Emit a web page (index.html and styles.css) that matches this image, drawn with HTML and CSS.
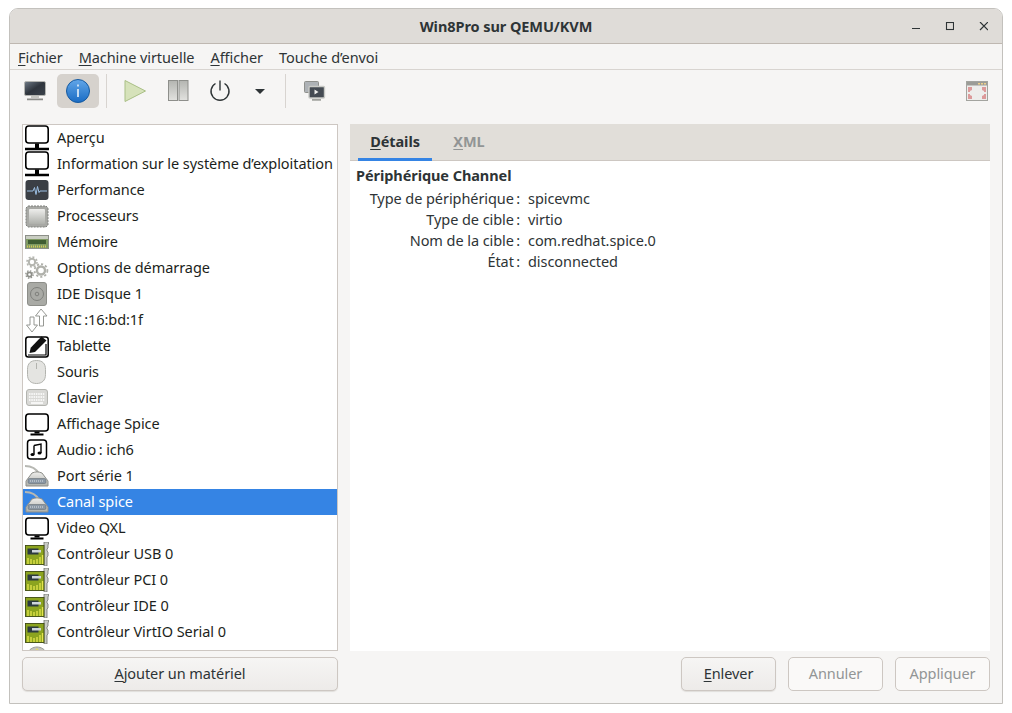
FILE: index.html
```html
<!DOCTYPE html>
<html>
  <head>
    <meta charset="UTF-8">
    <title>Win8Pro sur QEMU/KVM</title>
    <link rel="stylesheet" href="styles.css">
  </head>

  <body>
    <svg class="defs" width="0" height="0">
      <defs>
        <linearGradient id="screen" x1="0" y1="0" x2="1" y2="1">
          <stop offset="0" stop-color="#6f7a86"/><stop offset=".5" stop-color="#2f353d"/><stop offset="1" stop-color="#3c434c"/>
        </linearGradient>
        <linearGradient id="metal" x1="0" y1="0" x2="0" y2="1">
          <stop offset="0" stop-color="#eeeeec"/><stop offset="1" stop-color="#aeb0ab"/>
        </linearGradient>
        <linearGradient id="bar" x1="0" y1="0" x2="0" y2="1">
          <stop offset="0" stop-color="#b4b5b1"/><stop offset="1" stop-color="#e2e2df"/>
        </linearGradient>
        <linearGradient id="orb" x1="0" y1="0" x2="0" y2="1">
          <stop offset="0" stop-color="#62a6e8"/><stop offset="1" stop-color="#1a6cc4"/>
        </linearGradient>

        <symbol id="i-monitor-wide" viewBox="0 0 24 26">
          <rect x=".8" y="1" width="22.400" height="17" rx="3" fill="#fff" stroke="#000" stroke-width="1.600"/>
          <path d="M10 18.500h4v4.500h-4z" fill="#000"/>
          <path d="M0 22.800h24v2.400H0z" fill="#000"/>
        </symbol>
        <symbol id="i-monitor" viewBox="0 0 24 24">
          <rect x=".8" y="2" width="22.400" height="17" rx="3" fill="#fff" stroke="#000" stroke-width="1.600"/>
          <path d="M9.500 19.500h5v2h-5z" fill="#000"/>
          <path d="M5.500 21.500h13v2h-13z" fill="#000"/>
        </symbol>
        <symbol id="i-perf" viewBox="0 0 24 24">
          <rect x=".5" y="2" width="23" height="20" rx="3" fill="#3b3f45"/>
          <path d="M2 13h6l1.500-3.500 1.500 7 1.500-8 1.500 6 1-1.500h7" fill="none" stroke="#9cc0e4" stroke-width="1"/>
        </symbol>
        <symbol id="i-cpu" viewBox="0 0 24 24">
          <path d="M3 2h18l2 2v17l-2 2H3l-2-2V4z" fill="#a8a9a5" stroke="#7f807c" stroke-dasharray="2 1"/>
          <rect x="4" y="5" width="16" height="15" rx="1" fill="url(#metal)"/>
        </symbol>
        <symbol id="i-ram" viewBox="0 0 24 24">
          <rect x=".5" y="5.500" width="23" height="13" fill="#7f9a63" stroke="#8c8f88"/>
          <rect x="1" y="6" width="22" height="3" fill="#c9cdc2"/>
          <rect x="3" y="10" width="18" height="4" fill="#3f5c33"/>
          <path d="M2 16.500h20" stroke="#d4c75a" stroke-width="2" stroke-dasharray="1 1"/>
        </symbol>
        <symbol id="i-gears" viewBox="0 0 24 24">
          <circle cx="7" cy="6" r="3.200" fill="none" stroke="#b4b5af" stroke-width="2"/>
          <circle cx="7" cy="6" r="5" fill="none" stroke="#b4b5af" stroke-width="1.600" stroke-dasharray="2 1.900"/>
          <circle cx="16" cy="14.500" r="4" fill="none" stroke="#b0b1ab" stroke-width="2.400"/>
          <circle cx="16" cy="14.500" r="6.400" fill="none" stroke="#b0b1ab" stroke-width="1.800" stroke-dasharray="2.200 2"/>
          <circle cx="4.500" cy="18.500" r="2.200" fill="none" stroke="#8d8e88" stroke-width="1.800"/>
          <circle cx="4.500" cy="18.500" r="3.700" fill="none" stroke="#8d8e88" stroke-width="1.200" stroke-dasharray="1.500 1.400"/>
        </symbol>
        <symbol id="i-disk" viewBox="0 0 24 24">
          <rect x="2.500" y=".5" width="19" height="23" rx="2.500" fill="#a9aaa5" stroke="#8d8e89"/>
          <circle cx="12" cy="12" r="6.500" fill="none" stroke="#7f807c"/>
          <circle cx="12" cy="12" r="1.800" fill="none" stroke="#7f807c"/>
        </symbol>
        <symbol id="i-nic" viewBox="0 0 24 24">
          <path d="M7 24l-5.500-7h3.500V9h4v8h3.500z" fill="#fff" stroke="#8b8d88" stroke-width=".9"/>
          <path d="M16 1l6 7h-3.500v10h-4V8H10.500z" fill="#fff" stroke="#8b8d88" stroke-width=".9"/>
        </symbol>
        <symbol id="i-tablet" viewBox="0 0 24 24">
          <rect x=".8" y="3" width="22.400" height="20" rx="2.500" fill="#fff" stroke="#000" stroke-width="1.500"/>
          <path d="M4.500 19l1.200-5.200L16.500 2.500l5 4L10 18z" fill="#111"/>
          <path d="M3 21h18V10" fill="none" stroke="#000" stroke-width="1.200"/>
        </symbol>
        <symbol id="i-mouse" viewBox="0 0 24 24">
          <path d="M11.500 .5c6 0 9 3 9 9v5c0 6-3.500 9-9 9s-9-3-9-9v-5c0-6 3-9 9-9z" fill="#e4e4e1" stroke="#b2b3ae"/>
          <path d="M11.500 3v6" stroke="#b2b3ae"/>
        </symbol>
        <symbol id="i-keys" viewBox="0 0 24 24">
          <rect x="1.500" y="3.500" width="21" height="16" rx="2.500" fill="#d9d9d6" stroke="#b3b4af"/>
          <path d="M4 8h16M4 11h16M4 14h16" stroke="#fff" stroke-width="1.500" stroke-dasharray="1.500 .8"/>
          <path d="M6 17h12" stroke="#fff" stroke-width="1.500"/>
        </symbol>
        <symbol id="i-audio" viewBox="0 0 24 24">
          <rect x="2.500" y="2" width="19" height="19" rx="3" fill="#fff" stroke="#000" stroke-width="1.500"/>
          <path d="M9 7.500l7-1.500v9M9 7.500v9" fill="none" stroke="#000" stroke-width="1.400"/>
          <ellipse cx="7.500" cy="16.500" rx="2" ry="1.600" fill="#000"/>
          <ellipse cx="14.500" cy="15" rx="2" ry="1.600" fill="#000"/>
        </symbol>
        <symbol id="i-serial" viewBox="0 0 24 24">
          <path d="M0 2c7 0 11 2 14 8" fill="none" stroke="#b7b8b3" stroke-width="2.200"/>
          <path d="M7 9c4-1.500 6-1.500 10 0l6 8v5H1v-5z" fill="url(#metal)" stroke="#8f908b"/>
          <rect x="3" y="14.500" width="18" height="5" rx="1.500" fill="#8a97a4" stroke="#666e75" stroke-width=".6"/>
          <path d="M5 17h14" stroke="#dfe3e6" stroke-dasharray="1 1"/>
        </symbol>
        <symbol id="i-card" viewBox="0 0 24 24">
          <path d="M19 0h5l-1 3v3l-1 1v2l1 1v4l-1 1v9h-3z" fill="#c9cbc5" stroke="#6f716c" stroke-width=".8"/>
          <rect x=".5" y="3.500" width="18.500" height="19" fill="#8ca41f" stroke="#3e4a12" stroke-width=".9"/>
          <rect x="2.500" y="6.500" width="11" height="6" fill="#2c3a3f"/>
          <rect x="7" y="8" width="9" height="2.500" fill="#cfd6dc"/>
          <path d="M3 22v-6M6 22v-5M9 22v-4M12 22v-5M15 22v-7M17.500 22v-9" stroke="#e6e64e" stroke-width="1.300"/>
        </symbol>
        <symbol id="i-misc" viewBox="0 0 24 24">
          <path d="M12 1c4 0 8 2 11 8v3H1V9C4 3 8 1 12 1z" fill="#c4c5bf" stroke="#9c9d98"/>
          <path d="M12 2l2.500 3h-5z" fill="#e6da6a"/>
        </symbol>
      </defs>
    </svg>

    <div class="window">
      <header class="titlebar">
        <span class="title">Win8Pro sur QEMU/KVM</span>
        <div class="wm-buttons">
          <svg width="10" height="10" viewBox="0 0 10 10"><path d="M2 6.500h8" stroke="#2e3436" stroke-width="1.200"/></svg>
          <svg width="10" height="10" viewBox="0 0 10 10"><rect x="2.500" y=".5" width="7" height="7" fill="none" stroke="#2e3436" stroke-width="1.100"/></svg>
          <svg width="10" height="10" viewBox="0 0 10 10"><path d="M2 0l8 8M10 0l-8 8" stroke="#2e3436" stroke-width="1.200"/></svg>
        </div>
      </header>

      <nav class="menubar">
        <span><u>F</u>ichier</span>
        <span><u>M</u>achine virtuelle</span>
        <span><u>A</u>fficher</span>
        <span>Touche d’envoi</span>
      </nav>

      <div class="toolbar">
        <button class="tool first">
          <svg width="24" height="24" viewBox="0 0 24 24">
            <rect x="1.500" y="2.500" width="21" height="14" rx="1.500" fill="url(#screen)" stroke="#b4b5b1"/>
            <path d="M8 17h8v2H8z" fill="#c4c5c0"/>
            <path d="M4 19.500h16v1.800H4z" fill="#8b8c88"/>
          </svg>
        </button>
        <button class="tool active">
          <svg width="24" height="24" viewBox="0 0 24 24">
            <circle cx="12" cy="12" r="11.500" fill="url(#orb)" stroke="#175a9f"/>
            <path d="M12 5.500v2M12 10v8" stroke="#d6e8f8" stroke-width="1.800"/>
          </svg>
        </button>
        <span class="sep"></span>
        <button class="tool">
          <svg width="24" height="24" viewBox="0 0 24 24"><path d="M1 1.500L21.500 12 1 22.500z" fill="#d6e2ba" stroke="#a9bf85"/></svg>
        </button>
        <button class="tool">
          <svg width="24" height="24" viewBox="0 0 24 24">
            <rect x="2.500" y="1.500" width="9" height="20" fill="url(#bar)" stroke="#8e8f8b"/>
            <rect x="13" y="1.500" width="9" height="20" fill="url(#bar)" stroke="#8e8f8b"/>
          </svg>
        </button>
        <button class="tool">
          <svg width="24" height="24" viewBox="0 0 24 24">
            <path d="M7.500 4.500a9 9 0 1 0 9 0M12 1.500v10" fill="none" stroke="#2e3436" stroke-width="1.400"/>
          </svg>
        </button>
        <button class="tool arrow">
          <svg width="10" height="5" viewBox="0 0 10 5"><path d="M0 0h10L5 5z" fill="#2e3436"/></svg>
        </button>
        <span class="sep second"></span>
        <button class="tool">
          <svg width="24" height="24" viewBox="0 0 24 24">
            <rect x="1.500" y="2.500" width="14" height="11" rx="1" fill="#aeb2b6" stroke="#8f908c"/>
            <rect x="6" y="7.500" width="15.500" height="11.500" rx="1" fill="#454b53" stroke="#c9cac6" stroke-width="1.400"/>
            <path d="M11.500 10.500l4 2.500-4 2.500z" fill="#eeeeec"/>
            <path d="M9 20h9v1.800H9z" fill="#a1a29e"/>
          </svg>
        </button>
        <button class="tool fullscreen">
          <svg width="24" height="24" viewBox="0 0 24 24">
            <rect x="1.500" y="2.500" width="21" height="19" fill="#ededeb" stroke="#a3a49f"/>
            <rect x="2" y="3" width="20" height="3.500" fill="#9b9c97"/>
            <path d="M13 4h2v1.500h-2zM16 4h2v1.500h-2zM19 4h2v1.500h-2z" fill="#eed08c"/>
            <path d="M3 8h4v3l-2 1v1H3zM21 8h-4v3l2 1v1h2zM3 20h4v-3l-2-1v-1H3zM21 20h-4v-3l2-1v-1h2z" fill="#dc9a9a"/>
          </svg>
        </button>
      </div>

      <div class="content">
        <div class="left">
          <ul class="devices">
            <li><svg class="tall" viewBox="0 0 24 26"><use href="#i-monitor-wide"/></svg>Aperçu</li>
            <li><svg class="tall" viewBox="0 0 24 26"><use href="#i-monitor-wide"/></svg>Information sur le système d’exploitation</li>
            <li><svg><use href="#i-perf"/></svg>Performance</li>
            <li><svg><use href="#i-cpu"/></svg>Processeurs</li>
            <li><svg><use href="#i-ram"/></svg>Mémoire</li>
            <li><svg><use href="#i-gears"/></svg>Options de démarrage</li>
            <li><svg><use href="#i-disk"/></svg>IDE Disque 1</li>
            <li><svg><use href="#i-nic"/></svg>NIC&#8239;:16:bd:1f</li>
            <li><svg><use href="#i-tablet"/></svg>Tablette</li>
            <li><svg><use href="#i-mouse"/></svg>Souris</li>
            <li><svg><use href="#i-keys"/></svg>Clavier</li>
            <li><svg><use href="#i-monitor"/></svg>Affichage Spice</li>
            <li><svg><use href="#i-audio"/></svg>Audio&#8239;: ich6</li>
            <li><svg><use href="#i-serial"/></svg>Port série 1</li>
            <li class="selected"><svg><use href="#i-serial"/></svg>Canal spice</li>
            <li><svg><use href="#i-monitor"/></svg>Video QXL</li>
            <li><svg><use href="#i-card"/></svg>Contrôleur USB 0</li>
            <li><svg><use href="#i-card"/></svg>Contrôleur PCI 0</li>
            <li><svg><use href="#i-card"/></svg>Contrôleur IDE 0</li>
            <li><svg><use href="#i-card"/></svg>Contrôleur VirtIO Serial 0</li>
            <li><svg><use href="#i-misc"/></svg></li>
          </ul>
          <button class="btn wide"><u>A</u>jouter un matériel</button>
        </div>

        <div class="right">
          <div class="panel">
            <div class="tabs">
              <span class="tab current"><u>D</u>étails</span>
              <span class="tab"><u>X</u>ML</span>
            </div>
            <div class="details">
              <h3>Périphérique Channel</h3>
              <div class="props">
                <span class="key">Type de périphérique&#8239;:</span><span>spicevmc</span>
                <span class="key">Type de cible&#8239;:</span><span>virtio</span>
                <span class="key">Nom de la cible&#8239;:</span><span>com.redhat.spice.0</span>
                <span class="key">État&#8239;:</span><span>disconnected</span>
              </div>
            </div>
          </div>
          <div class="actions">
            <button class="btn"><u>E</u>nlever</button>
            <button class="btn" disabled>Annuler</button>
            <button class="btn" disabled>Appliquer</button>
          </div>
        </div>
      </div>
    </div>
  </body>
</html>
```
FILE: styles.css
```css
body {
  margin: 0;
  background-color: white;
  font-family: "Noto Sans", sans-serif;
  font-size: 14.5px;
  letter-spacing: -0.07px;
  color: #2e3436;
}

button {
  font: inherit;
  letter-spacing: inherit;
  color: inherit;
}

u {
  text-underline-offset: 2px;
}

.defs {
  position: absolute;
}

.window {
  box-sizing: border-box;
  width: 994px;
  height: 696px;
  margin: 8px 0 0 9px;
  display: flex;
  flex-direction: column;
  border: 1px solid #c3c1bd;
  border-top-left-radius: 9px;
  border-top-right-radius: 9px;
  background-color: #f6f5f4;
  overflow: hidden;
}

.titlebar {
  height: 35px;
  flex: none;
  box-sizing: border-box;
  display: flex;
  align-items: center;
  justify-content: center;
  position: relative;
  background-color: #dfdcd8;
  border-bottom: 1px solid #bfb8b1;
}

.title {
  font-weight: bold;
}

.wm-buttons {
  position: absolute;
  right: 14px;
  top: 13px;
  display: flex;
  gap: 24px;
}

.menubar {
  height: 25px;
  flex: none;
  display: flex;
  align-items: center;
  gap: 16px;
  padding-left: 8px;
  border-bottom: 1px solid #d8d4d0;
}

.toolbar {
  height: 54px;
  flex: none;
  display: flex;
  align-items: flex-start;
  padding-top: 4px;
  box-sizing: border-box;
}

.tool {
  width: 42px;
  height: 34px;
  padding: 0;
  border: none;
  border-radius: 5px;
  background: none;
  display: flex;
  align-items: center;
  justify-content: center;
}

.tool.first {
  margin-left: 4px;
  margin-right: 1px;
}

.tool.active {
  background-color: #d6d2cd;
}

.tool.arrow {
  width: 38px;
}

.tool.fullscreen {
  margin-left: auto;
  margin-right: 4px;
}

.sep {
  width: 1px;
  height: 34px;
  margin: 0 8px 0 7px;
  background-color: #d8d4d0;
}

.sep.second {
  margin: 0 8px 0 6px;
}

.content {
  flex: 1;
  min-height: 0;
  display: flex;
  gap: 12px;
  padding: 0 12px 12px;
}

.left {
  width: 316px;
  display: flex;
  flex-direction: column;
  gap: 6px;
}

.devices {
  flex: 1;
  min-height: 0;
  margin: 0;
  padding: 0;
  list-style: none;
  background-color: white;
  border: 1px solid #cdc7c2;
  overflow: hidden;
  color: #1c1f20;
}

.devices li {
  height: 26px;
  box-sizing: border-box;
  padding-bottom: 2px;
  display: flex;
  align-items: center;
  gap: 8px;
  white-space: nowrap;
}

.devices svg {
  width: 24px;
  height: 24px;
  flex: none;
  margin-left: 2px;
  margin-bottom: -2px;
}

.devices svg.tall {
  height: 26px;
}

.devices .selected {
  background-color: #3584e4;
  color: white;
}

.btn {
  height: 34px;
  box-sizing: border-box;
  flex: none;
  padding: 0 0 2px;
  border: 1px solid #cdc7c2;
  border-radius: 5px;
  background-image: linear-gradient(#f6f5f4, #edebe9);
  box-shadow: 0 1px 1px #e0dedb;
}

.btn:disabled {
  background-image: none;
  background-color: #faf9f8;
  box-shadow: none;
  color: #929595;
}

.right {
  flex: 1;
  display: flex;
  flex-direction: column;
  gap: 6px;
}

.panel {
  flex: 1;
  min-height: 0;
  display: flex;
  flex-direction: column;
  background-color: white;
}

.tabs {
  height: 37px;
  flex: none;
  box-sizing: border-box;
  display: flex;
  padding-left: 8px;
  background-color: #e1ded9;
  border-bottom: 1px solid #cdc7c2;
}

.tab {
  width: 74px;
  height: 37px;
  box-sizing: border-box;
  text-align: center;
  line-height: 35px;
  font-weight: bold;
  color: #929595;
}

.tab.current {
  color: #2e3436;
  border-bottom: 3px solid #3584e4;
}

.details {
  padding: 4px 6px;
}

h3 {
  margin: 0;
  font-size: 14.5px;
  line-height: 20px;
}

.props {
  display: grid;
  grid-template-columns: 164px auto;
  column-gap: 8px;
  grid-auto-rows: 21px;
  margin-top: 3px;
  line-height: 21px;
}

.key {
  text-align: right;
}

.actions {
  flex: none;
  display: flex;
  justify-content: flex-end;
  gap: 12px;
}

.actions .btn {
  width: 95px;
}
```
